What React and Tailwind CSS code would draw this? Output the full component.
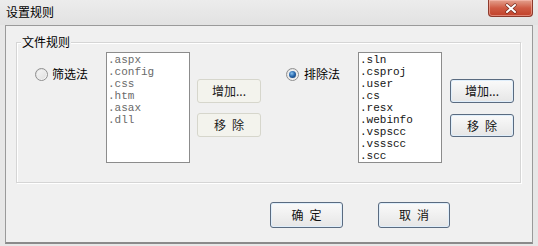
import React from "react";

const cjk = "font-['SimSun','Noto_Sans_CJK_SC',sans-serif]";

function Radio({ checked }) {
  return (
    <span className="relative flex h-[13px] w-[13px] shrink-0 items-center justify-center rounded-full border border-[#8f8f8f] bg-linear-to-br from-[#dcdcdc] to-[#fbfbfb]">
      <span className="flex h-[9px] w-[9px] items-center justify-center rounded-full bg-linear-to-br from-[#f6f6f6] to-[#e0e0e0]">
        {checked && (
          <span className="h-[7px] w-[7px] rounded-full bg-[radial-gradient(circle_at_40%_35%,#8cc3ee_0%,#2a6bb0_45%,#0b2f5e_100%)]" />
        )}
      </span>
    </span>
  );
}

function ListBox({ items, dim }) {
  return (
    <div className="mt-[9px] h-[111px] w-[84px] shrink-0 border border-[#8c8c8c] bg-white pl-[1px] pt-[1px]">
      {items.map((t) => (
        <div
          key={t}
          className={`font-['Liberation_Mono',monospace] text-[11px] leading-[12px] ${dim ? "text-[#6a6a6a]" : "text-[#141414]"}`}
        >
          {t}
        </div>
      ))}
    </div>
  );
}

function Chars({ a, b }) {
  return (
    <span className="flex gap-[6px]">
      <span>{a}</span>
      <span>{b}</span>
    </span>
  );
}

function LightBtn({ children }) {
  return (
    <div className={`flex h-[24px] w-[64px] items-center justify-center rounded-[3px] border border-[#d6d6cc] bg-[#f3f3ed] text-[12px] leading-[14px] text-[#1a1a1a] ${cjk}`}>
      {children}
    </div>
  );
}

function BlueBtn({ children, h = "h-[24px]", w = "w-[64px]" }) {
  return (
    <div className={`flex ${h} ${w} items-center justify-center rounded-[3px] border border-[#5a6b80] bg-linear-to-b from-[#fafafa] to-[#e6e6e6] shadow-[inset_0_0_0_1px_#dfeefb] text-[12px] leading-[14px] text-[#111] ${cjk}`}>
      {children}
    </div>
  );
}

export default function App() {
  return (
    <div className="flex h-[246px] w-[538px] flex-col overflow-hidden bg-[#e7e7e7]">
      <div className="flex h-[25px] items-start justify-between bg-linear-to-b from-[#ececec] to-[#e2e2e2]">
        <div className={`pl-[6px] pt-[5px] text-[12px] leading-[14px] text-black ${cjk}`}>设置规则</div>
        <div className="mr-[5px] flex h-[17px] w-[45px] items-center justify-center rounded-b-[4px] border border-t-0 border-[#8d3a2c] bg-linear-to-b from-[#e3a08e] via-[#cf5b44] to-[#c0412a] shadow-[inset_0_0_0_1px_rgba(255,200,190,0.5)]">
          <svg width="14" height="11" viewBox="0 0 14 11">
            <path d="M3 2 L11 9 M11 2 L3 9" stroke="#6b2418" strokeWidth="3.2" strokeLinecap="round" />
            <path d="M3 2 L11 9 M11 2 L3 9" stroke="#ffffff" strokeWidth="2" strokeLinecap="round" />
          </svg>
        </div>
      </div>
      <div className="mx-[5px] h-[219px] border border-[#9a9a9a] border-b-2 border-b-[#8a8a8a] bg-[#f0f0f0]">
        <div className="relative ml-[10px] mt-[16px] h-[141px] w-[505px] border border-[#d5d5d5] shadow-[inset_1px_1px_0_#ffffff,1px_1px_0_#ffffff]">
          <span className={`absolute left-[4px] top-[-8px] bg-[#f0f0f0] px-[1px] text-[12px] leading-[14px] text-black ${cjk}`}>文件规则</span>
          <div className="flex items-start">
            <div className="flex w-[89px] shrink-0 items-center gap-[4px] pl-[18px] pt-[24px]">
              <Radio />
              <span className={`text-[12px] leading-[14px] text-black ${cjk}`}>筛选法</span>
            </div>
            <ListBox dim items={[".aspx", ".config", ".css", ".htm", ".asax", ".dll"]} />
            <div className="ml-[7px] mt-[36px] flex w-[64px] shrink-0 flex-col gap-[10px]">
              <LightBtn>增加...</LightBtn>
              <LightBtn><Chars a="移" b="除" /></LightBtn>
            </div>
            <div className="flex w-[97px] shrink-0 items-center gap-[5px] pl-[25px] pt-[24px]">
              <Radio checked />
              <span className={`text-[12px] leading-[14px] text-black ${cjk}`}>排除法</span>
            </div>
            <ListBox items={[".sln", ".csproj", ".user", ".cs", ".resx", ".webinfo", ".vspscc", ".vssscc", ".scc"]} />
            <div className="ml-[8px] mt-[36px] flex w-[64px] shrink-0 flex-col gap-[11px]">
              <BlueBtn>增加...</BlueBtn>
              <BlueBtn h="h-[23px]"><Chars a="移" b="除" /></BlueBtn>
            </div>
          </div>
        </div>
        <div className="mt-[19px] flex gap-[35px] pl-[264px]">
          <BlueBtn h="h-[26px]" w="w-[73px]"><Chars a="确" b="定" /></BlueBtn>
          <BlueBtn h="h-[26px]" w="w-[72px]"><Chars a="取" b="消" /></BlueBtn>
        </div>
      </div>
    </div>
  );
}
